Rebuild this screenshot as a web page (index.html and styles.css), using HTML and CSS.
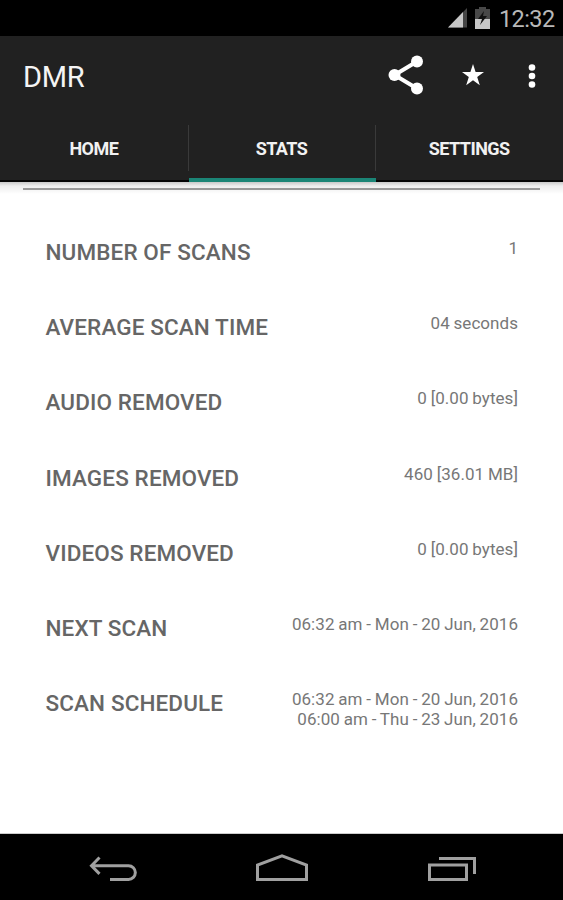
FILE: index.html
```html
<!DOCTYPE html>
<html lang="en">
<head>
<meta charset="utf-8">
<title>DMR</title>
<link rel="stylesheet" href="styles.css">
</head>
<body>
<div class="statusbar">
  <svg class="signal" width="19" height="21" viewBox="0 0 19 21"><path d="M0 20.500L19 1v19.500z" fill="#444"/><path d="M0 20.500L15 5v15.500z" fill="#c6c6c6"/></svg>
  <svg class="battery" width="15" height="22" viewBox="0 0 15 22"><path d="M4 0h7v2h4v20H0V2h4z" fill="#484848"/><path d="M0 12h15v10H0z" fill="#c6c6c6"/><path d="M9 4L3 12h4l-2 6 7-9H8z" fill="#111"/></svg>
  <span class="clock">12:32</span>
</div>
<header class="header">
  <div class="actionbar">
    <h1 class="title">DMR</h1>
    <svg class="share" width="36" height="40" viewBox="0 0 36 40"><path d="M29 6.500L6.500 20 29 33.500" fill="none" stroke="#fff" stroke-width="4"/><g fill="#fff"><circle cx="29" cy="6.500" r="6"/><circle cx="6.500" cy="20" r="6"/><circle cx="29" cy="33.500" r="6"/></g></svg>
    <svg class="star" width="22" height="22" viewBox="0 0 22 22"><path d="M11 0l2.600 8H22l-6.800 5 2.600 8.200L11 16.200l-6.800 5L6.800 13 0 8h8.400z" fill="#fff"/></svg>
    <svg class="more" width="8" height="24" viewBox="0 0 8 24" fill="#fff"><circle cx="4" cy="3.500" r="3.300"/><circle cx="4" cy="12" r="3.300"/><circle cx="4" cy="20.500" r="3.300"/></svg>
  </div>
  <nav class="tabs">
    <span class="tab">HOME</span>
    <span class="tab active">STATS</span>
    <span class="tab">SETTINGS</span>
  </nav>
</header>
<main class="content">
  <div class="rule"></div>
  <dl class="stats">
    <div class="row"><dt>NUMBER OF SCANS</dt><dd>1</dd></div>
    <div class="row"><dt>AVERAGE SCAN TIME</dt><dd>04 seconds</dd></div>
    <div class="row"><dt>AUDIO REMOVED</dt><dd>0 [0.00 bytes]</dd></div>
    <div class="row"><dt>IMAGES REMOVED</dt><dd>460 [36.01 MB]</dd></div>
    <div class="row"><dt>VIDEOS REMOVED</dt><dd>0 [0.00 bytes]</dd></div>
    <div class="row"><dt>NEXT SCAN</dt><dd>06:32 am - Mon - 20 Jun, 2016</dd></div>
    <div class="row"><dt>SCAN SCHEDULE</dt><dd>06:32 am - Mon - 20 Jun, 2016<br>06:00 am - Thu - 23 Jun, 2016</dd></div>
  </dl>
</main>
<footer class="navbar">
  <svg width="188" height="66" viewBox="0 0 188 66"><path d="M99.500 23.500l-8 8.200 8 8.200M91.500 31.700h37a6.700 6.700 0 0 1 0 13.700h-18.500"/></svg>
  <svg width="188" height="66" viewBox="0 0 188 66"><path d="M69.500 45.500V31L94 21.800 118.500 31v14.500z"/></svg>
  <svg width="187" height="66" viewBox="0 0 187 66"><path d="M53.500 31h37v14.500h-37zM63 24.500h35.500v15.500"/></svg>
</footer>
</body>
</html>
```
FILE: styles.css
```css
* { box-sizing: border-box; }
body {
  margin: 0;
  height: 900px;
  display: flex;
  flex-direction: column;
  overflow: hidden;
  font-family: Roboto, sans-serif;
  background: #fff;
}
.statusbar {
  height: 36px;
  flex: none;
  background: #000;
  display: flex;
  justify-content: flex-end;
  align-items: flex-start;
  padding: 7px 9px 0 0;
}
.battery { margin-left: 8px; }
.clock {
  width: 55px;
  margin-left: 9px;
  font-size: 23.500px;
  line-height: 24px;
  letter-spacing: -0.600px;
  color: #b8b8b8;
  white-space: nowrap;
}
.header {
  height: 146px;
  flex: none;
  background: #212121;
  border-bottom: 2px solid #050505;
}
.actionbar {
  height: 80px;
  display: flex;
  align-items: center;
  padding: 0 27px 0 23px;
}
.title {
  margin: 1px auto 0 0;
  font-size: 29px;
  font-weight: 400;
  letter-spacing: -0.300px;
  color: #f4f4f4;
}
.share { margin-top: -2px; }
.star { margin: -2px 44px 0 38px; }
.more { margin-top: -1px; }
.tabs { height: 66px; display: flex; }
.tab {
  flex: 1;
  position: relative;
  text-align: center;
  font-size: 18px;
  line-height: 66px;
  font-weight: 700;
  letter-spacing: -0.550px;
  color: #f1f1f1;
}
.tab + .tab::before {
  content: "";
  position: absolute;
  left: 0;
  top: 9px;
  width: 1px;
  height: 46px;
  background: #3a3a3a;
}
.active::after {
  content: "";
  position: absolute;
  left: 1px;
  right: -1px;
  bottom: 0;
  height: 4px;
  background: #1b8576;
}
.content {
  flex: 1;
  padding: 6px 23px 0;
  background: linear-gradient(#c9c9c9 0, #eee 4px, #f8f8f8 9px, #fff 12px);
  border-bottom: 1px solid #ccc;
}
.rule { height: 2px; background: #999; }
.stats { margin: 49px 22px 0 22.500px; }
.row {
  height: 75.200px;
  display: flex;
  justify-content: space-between;
}
dt {
  font-size: 22.500px;
  line-height: 27px;
  font-weight: 500;
  letter-spacing: 0.120px;
  color: #666;
  white-space: nowrap;
}
dd {
  margin: 0;
  font-size: 17px;
  line-height: 19.500px;
  letter-spacing: 0.050px;
  word-spacing: -0.500px;
  color: #777;
  text-align: right;
  white-space: nowrap;
}
.navbar {
  height: 66px;
  flex: none;
  display: flex;
  background: #000;
}
.navbar path { fill: none; stroke: #a0a0a0; stroke-width: 3; }
```
